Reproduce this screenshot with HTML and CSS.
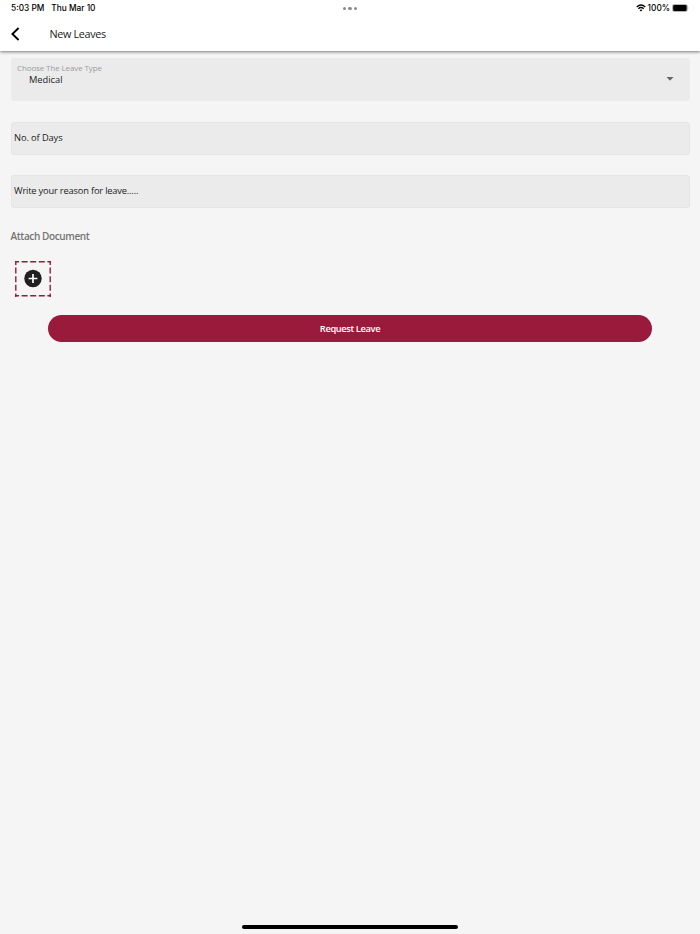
FILE: index.html
```html
<!DOCTYPE html>
<html lang="en">
<head>
    <meta charset="UTF-8">
    <meta name="viewport" content="width=device-width, initial-scale=1.0">
    <title>New Leaves</title>
    <link rel="stylesheet" href="styles.css">
</head>
<body>
    <header class="top">
        <div class="status-bar">
            <div class="status-left">
                <span>5:03 PM</span>
                <span>Thu Mar 10</span>
            </div>
            <div class="dots"><i></i><i></i><i></i></div>
            <div class="status-right">
                <svg width="10" height="8" viewBox="0 0 10 8">
                    <path d="M.7 3Q5-1 9.3 3M2.3 4.7Q5 2.3 7.7 4.7" fill="none" stroke="#000" stroke-width="1.2"/>
                    <path d="M3.5 6Q5 4.8 6.5 6L5 7.6Z"/>
                </svg>
                <span>100%</span>
                <svg width="17" height="8" viewBox="0 0 17 8">
                    <rect x=".4" y=".4" width="15" height="7.2" rx="2" fill="#fff" stroke="#999" stroke-width=".8"/>
                    <rect x="1.1" y="1.1" width="13.6" height="5.8" rx="1.2"/>
                    <path d="M16.1 2.8Q17 4 16.1 5.2Z" fill="#999"/>
                </svg>
            </div>
        </div>
        <div class="nav-bar">
            <svg width="10" height="14" viewBox="0 0 10 14">
                <path d="M8.6 1L2.4 7L8.6 13" fill="none" stroke="#000" stroke-width="1.9"/>
            </svg>
            <h1>New Leaves</h1>
        </div>
    </header>

    <main class="form">
        <div class="select">
            <div>
                <label>Choose The Leave Type</label>
                <p>Medical</p>
            </div>
            <svg class="arrow" width="8" height="4" viewBox="0 0 8 4">
                <path d="M.5 0H7.5L4 3.8Z" fill="#666"/>
            </svg>
        </div>
        <div class="field days">No. of Days</div>
        <div class="field reason">Write your reason for leave.....</div>

        <h2>Attach Document</h2>
        <svg class="upload" width="36" height="36" viewBox="0 0 36 36">
            <path d="M0 .8H36M0 34.7H36M.8 0V36M35.2 0V36" fill="none" stroke="#9a1a3c" stroke-width="1.4" stroke-dasharray="6 2.6" stroke-dashoffset="2"/>
            <circle cx="18" cy="17.5" r="8.7" fill="#202020"/>
            <path d="M18 13.1V21.9M13.6 17.5H22.4" stroke="#fff" stroke-width="1.7"/>
        </svg>
        <button class="submit">Request Leave</button>
    </main>

    <div class="home-bar"></div>
</body>
</html>
```

FILE: styles.css
```css
* {
    margin: 0;
    padding: 0;
    box-sizing: border-box;
}

body {
    display: flex;
    flex-direction: column;
    height: 100vh;
    overflow: hidden;
    font-family: "Open Sans", "Noto Sans", sans-serif;
    font-size: 9.3px;
    color: #222;
    background-color: #f5f5f5;
}

svg {
    display: block;
    flex: none;
}

/* Status bar and title */
.top {
    height: 51px;
    background-color: #fff;
    box-shadow: 0 1px 3px rgba(0, 0, 0, 0.5);
}

.status-bar {
    display: grid;
    grid-template-columns: 1fr auto 1fr;
    align-items: center;
    height: 17px;
    padding: 0 11px;
    font-family: Inter, sans-serif;
    font-size: 8.3px;
    font-weight: 500;
    color: #000;
}

.status-left {
    display: flex;
    gap: 7px;
    margin-top: -1px;
}

.status-right {
    display: flex;
    align-items: center;
    justify-content: flex-end;
    gap: 2px;
    margin-top: -1px;
}

.dots {
    display: flex;
    gap: 2px;
}

.dots i {
    width: 3.6px;
    height: 3.6px;
    border-radius: 50%;
    background-color: #8c8c8c;
}

.nav-bar {
    display: flex;
    align-items: center;
    height: 33px;
    padding-left: 10px;
}

h1 {
    margin-left: 29.5px;
    font-size: 10.8px;
    font-weight: 400;
    letter-spacing: -0.33px;
}

/* Form */
.form {
    flex: 1;
    padding: 7px 10.5px 0;
}

.select {
    display: flex;
    justify-content: space-between;
    height: 43px;
    padding: 4px 16px 0 6.5px;
    border-radius: 3px;
    background-color: #ebebeb;
}

.select label {
    display: block;
    font-size: 8px;
    line-height: 11px;
    letter-spacing: -0.12px;
    color: #9c9c9c;
}

.select p {
    padding: 1px 0 0 12px;
    line-height: 12px;
}

.arrow {
    margin-top: 15px;
}

.field {
    display: flex;
    align-items: center;
    height: 33px;
    margin-top: 21px;
    padding: 0 2.5px 2px;
    border: 1px solid #e5e5e5;
    border-radius: 3px;
    background-color: #ebebeb;
}

.days {
    letter-spacing: -0.1px;
}

.reason {
    margin-top: 20px;
    letter-spacing: -0.18px;
}

h2 {
    margin-top: 21px;
    font-size: 10px;
    font-weight: 600;
    line-height: 14px;
    letter-spacing: -0.38px;
    color: #747474;
}

.upload {
    margin: 18px 0 0 4.5px;
}

.submit {
    display: block;
    width: 604px;
    height: 27px;
    margin: 18px auto 0;
    border: none;
    border-radius: 14px;
    background-color: #9a1a3c;
    font-family: inherit;
    font-size: 9.3px;
    font-weight: 600;
    letter-spacing: -0.37px;
    color: #fff;
}

.home-bar {
    width: 216px;
    height: 4px;
    margin: 0 auto 5px;
    border-radius: 2px;
    background-color: #000;
}
```
